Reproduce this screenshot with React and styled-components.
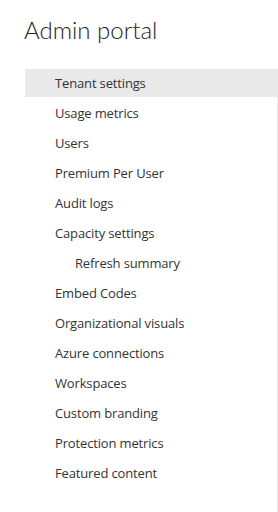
import React from "react";
import styled, { createGlobalStyle } from "styled-components";

const Global = createGlobalStyle`
  html, body { margin: 0; padding: 0; background: #ffffff; }
  body { font-family: "Open Sans", "Noto Sans", sans-serif; }
`;

const Page = styled.div`
  width: 278px;
  height: 512px;
  display: flex;
  flex-direction: column;
  background: #ffffff;
  overflow: hidden;
`;

const Title = styled.h1`
  margin: 0;
  padding: 16px 0 0 24px;
  height: 69px;
  flex-shrink: 0;
  box-sizing: border-box;
  font-family: Lato, "Open Sans", sans-serif;
  font-weight: 300;
  font-size: 24px;
  line-height: 28px;
  color: #252423;
`;

const Nav = styled.ul`
  list-style: none;
  margin: 0 0 0 25px;
  padding: 0;
  flex: 1;
  display: flex;
  flex-direction: column;
  gap: 2px;
  border-right: 1px solid #ececec;
`;

const Item = styled.li`
  height: 28px;
  flex-shrink: 0;
  display: flex;
  align-items: center;
  padding-left: ${(p) => (p.$sub ? 50 : 30)}px;
  margin-right: ${(p) => (p.$active ? "-1px" : "0")};
  background: ${(p) => (p.$active ? "#e9e9e9" : "transparent")};
  font-family: "Open Sans", sans-serif;
  font-size: 13px;
  color: #333333;
  letter-spacing: -0.15px;
  white-space: nowrap;
`;

const items = [
  { label: "Tenant settings", active: true },
  { label: "Usage metrics" },
  { label: "Users" },
  { label: "Premium Per User" },
  { label: "Audit logs" },
  { label: "Capacity settings" },
  { label: "Refresh summary", sub: true },
  { label: "Embed Codes" },
  { label: "Organizational visuals" },
  { label: "Azure connections" },
  { label: "Workspaces" },
  { label: "Custom branding" },
  { label: "Protection metrics" },
  { label: "Featured content" },
];

export default function App() {
  return (
    <>
      <Global />
      <Page>
        <Title>Admin portal</Title>
        <Nav>
          {items.map((it) => (
            <Item key={it.label} $active={it.active} $sub={it.sub}>
              {it.label}
            </Item>
          ))}
        </Nav>
      </Page>
    </>
  );
}
